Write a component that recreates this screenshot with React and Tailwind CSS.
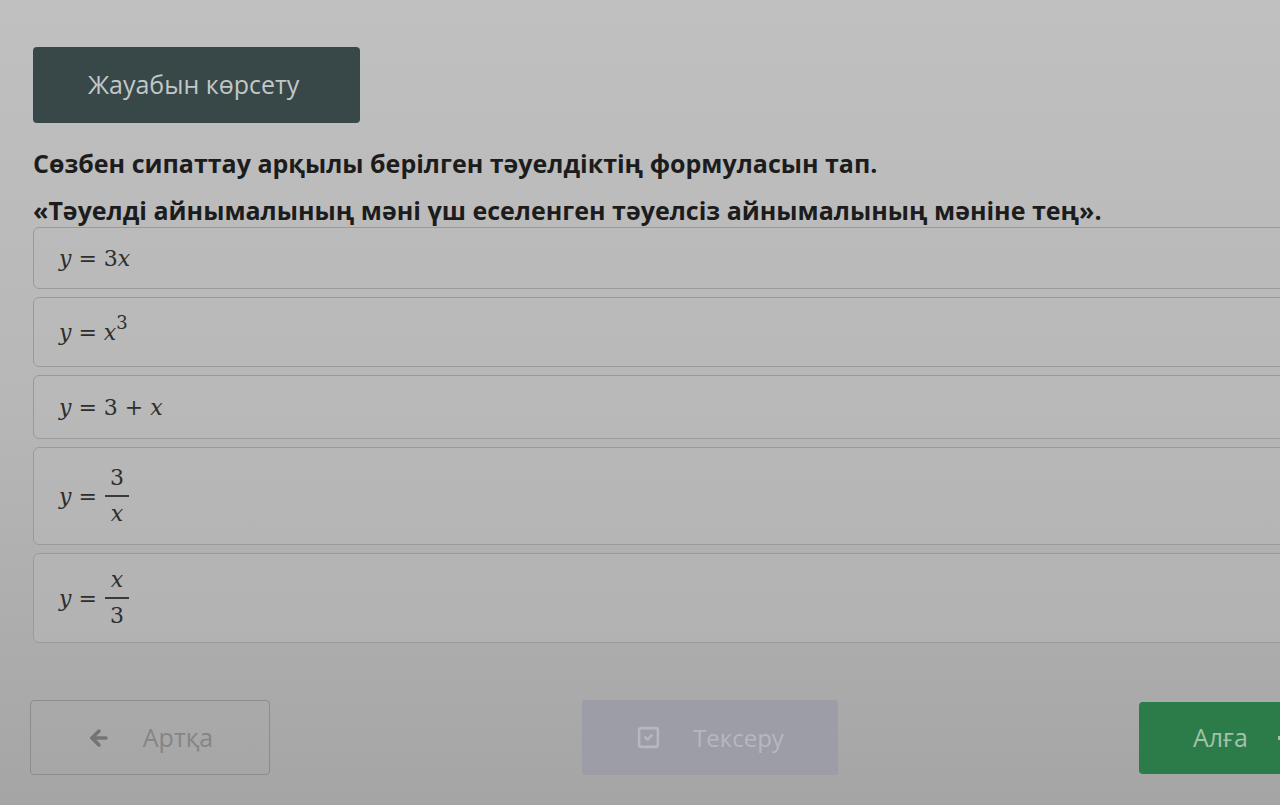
import React from 'react';
import { ArrowLeft, SquareCheck } from 'lucide-react';

const options = [
  { h: 'h-[62px]', content: <><i>y</i> = 3<i>x</i></> },
  { h: 'h-[70px]', content: <><i>y</i> = <i>x</i><span className="relative -top-[11px] text-[18px] not-italic">3</span></> },
  { h: 'h-[64px]', content: <><i>y</i> = 3 + <i>x</i></> },
  { h: 'h-[98px]', frac: ['3', 'x'] },
  { h: 'h-[90px]', frac: ['x', '3'] },
];

const Frac = ({ top, bottom }) => (
  <span className="ml-[8px] inline-flex flex-col items-center align-middle leading-[30px]">
    <span className={top === 'x' ? 'italic' : ''}>{top}</span>
    <span className="my-[2px] block h-[1.5px] w-[24px] bg-[#3a3a3a]" />
    <span className={bottom === 'x' ? 'italic' : ''}>{bottom}</span>
  </span>
);

const App = () => {
  return (
    <div className="h-[805px] w-[1280px] overflow-hidden bg-gradient-to-b from-[#c0c0c0] via-[#b7b7b7] to-[#a5a5a5] font-['Open_Sans',sans-serif]">
      <div className="pl-[33px] pt-[47px]">
        <button className="h-[76px] w-[327px] rounded-[4px] bg-[#384848] pl-[55px] text-left text-[25px] text-[#c3c7c7]">
          Жауабын көрсету
        </button>

        <h1 className="mt-[23px] text-[25px] font-bold leading-[34px] text-[#1c1c1c]">
          Сөзбен сипаттау арқылы берілген тәуелдіктің формуласын тап.
        </h1>
        <p className="mt-[13px] text-[25px] font-bold leading-[34px] text-[#1c1c1c]">
          «Тәуелді айнымалының мәні үш еселенген тәуелсіз айнымалының мәніне тең».
        </p>

        <div className="mt-0 flex w-[1270px] flex-col gap-[8px]">
          {options.map((o, i) => (
            <div
              key={i}
              className={`${o.h} flex shrink-0 items-center rounded-[6px] border border-[#9a9a9a] bg-[#bcbcbc]/40 pl-[25px] font-['DejaVu_Serif',serif] text-[22px] text-[#2e2e2e]`}
            >
              {o.frac ? (
                <span className="flex items-center">
                  <i>y</i>&nbsp;=
                  <Frac top={o.frac[0]} bottom={o.frac[1]} />
                </span>
              ) : (
                <span>{o.content}</span>
              )}
            </div>
          ))}
        </div>
      </div>

      <div className="mt-[57px] flex items-center pl-[30px]">
        <button className="flex h-[75px] w-[240px] shrink-0 items-center justify-center gap-[32px] rounded-[4px] border border-[#8c8c8c] text-[25px] text-[#858585]">
          <ArrowLeft className="h-[24px] w-[24px] text-[#747474]" strokeWidth={3.5} />
          <span>Артқа</span>
        </button>

        <button className="ml-[312px] flex h-[75px] w-[256px] shrink-0 items-center justify-center gap-[32px] rounded-[3px] bg-[#9c9da6] text-[24px] text-[#b6b8bd]">
          <SquareCheck className="h-[25px] w-[25px]" strokeWidth={2.5} />
          <span>Тексеру</span>
        </button>

        <button className="ml-[301px] flex h-[72px] w-[160px] shrink-0 items-center rounded-l-[4px] bg-[#2c7c4a] pl-[54px] text-[25px] text-[#a3c2ab]">
          Алға
          <span className="ml-[30px] block h-[4px] w-[10px] bg-[#a3c2ab]" />
        </button>
      </div>
    </div>
  );
};

export default App;
